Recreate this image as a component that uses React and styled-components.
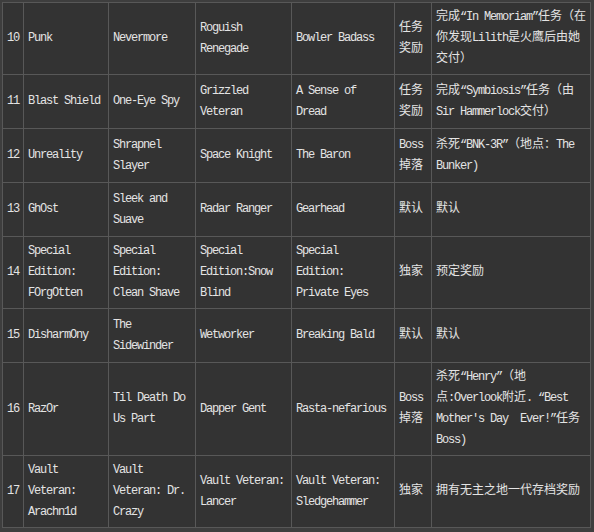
import React from "react";
import styled, { createGlobalStyle } from "styled-components";

const GlobalStyle = createGlobalStyle`
  body {
    margin: 0;
    background: #3e3e3e;
  }
`;

// grid lines are the gaps between cells
const Table = styled.div`
  display: grid;
  grid-template-columns: 20px 84px 86px 95px 102px 36px 158px;
  grid-auto-rows: minmax(53px, auto);
  gap: 1px;
  padding: 1px;
  background: #585858;
  width: max-content;
  margin: 2px 0 0 2px;
`;

const Cell = styled.div`
  display: flex;
  align-items: center;
  background: #333333;
  padding: 4px;
  color: #e4e4e4;
  font-family: "Liberation Mono", "Noto Sans CJK SC", monospace;
  font-size: 12px;
  letter-spacing: -1.2px;
  line-height: 21px;
`;

const Text = styled.div`
  white-space: ${(p) => (p.$pre ? "pre" : "normal")};
`;

const Han = styled.span`
  font-family: "Noto Sans CJK SC", sans-serif;
  font-size: 12px;
  letter-spacing: 0;
  line-height: 1;
  text-spacing-trim: space-all;
`;

const rows = [
  ["10", "Punk", "Nevermore", "Roguish Renegade", "Bowler Badass", "任务奖励", "完成“In Memoriam”任务（在\n你发现Lilith是火鹰后由她\n交付）"],
  ["11", "Blast Shield", "One-Eye Spy", "Grizzled Veteran", "A Sense of Dread", "任务奖励", "完成“Symbiosis”任务（由\nSir Hammerlock交付）"],
  ["12", "Unreality", "Shrapnel Slayer", "Space Knight", "The Baron", "Boss 掉落", "杀死“BNK-3R”（地点：The\nBunker)"],
  ["13", "GhOst", "Sleek and Suave", "Radar Ranger", "Gearhead", "默认", "默认"],
  ["14", "Special Edition: FOrgOtten", "Special Edition: Clean Shave", "Special Edition:Snow Blind", "Special Edition: Private Eyes", "独家", "预定奖励"],
  ["15", "DisharmOny", "The Sidewinder", "Wetworker", "Breaking Bald", "默认", "默认"],
  ["16", "RazOr", "Til Death Do Us Part", "Dapper Gent", "Rasta-nefarious", "Boss 掉落", "杀死“Henry”（地\n点:Overlook附近. “Best\nMother's Day  Ever!”任务\nBoss)"],
  ["17", "Vault Veteran: Arachn1d", "Vault Veteran: Dr. Crazy", "Vault Veteran: Lancer", "Vault Veteran: Sledgehammer", "独家", "拥有无主之地一代存档奖励"],
];

// split a string into latin and CJK runs, CJK gets its own font
const mixed = (str) =>
  str.split(/([\u3000-\u303f\u4e00-\u9fff\uff00-\uffef]+)/).map((part, i) =>
    i % 2 === 1 ? <Han key={i}>{part}</Han> : part
  );

function App() {
  return (
    <>
      <GlobalStyle />
      <Table>
        {rows.map((row) =>
          row.map((text, i) => (
            <Cell key={row[0] + "-" + i}>
              <Text $pre={i === 6}>{mixed(text)}</Text>
            </Cell>
          ))
        )}
      </Table>
    </>
  );
}

export default App;
